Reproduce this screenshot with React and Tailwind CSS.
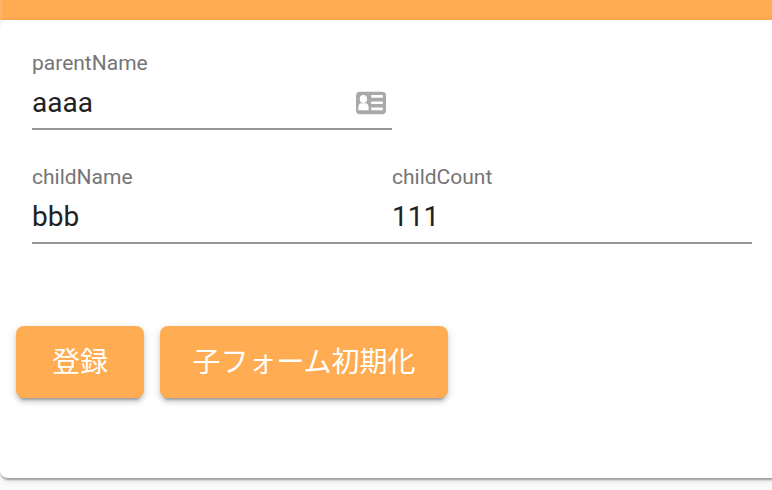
function Field({ label, value, children }) {
  return (
    <label className="block w-[360px]">
      <span className="block h-6 text-[21px] leading-6 text-[#757575]">{label}</span>
      <span className="mt-3 flex h-8 items-center justify-between pr-1.5">
        <span className="text-[28px] leading-8 text-[#212121]">{value}</span>
        {children}
      </span>
      <span className="mt-[9px] block h-0.5 bg-[#949494]" />
    </label>
  );
}

function ContactIcon() {
  return (
    <svg width="30" height="24" viewBox="0 0 30 24">
      <rect width="30" height="22.5" y="0.75" rx="4" fill="#a9a9a9" />
      <g fill="#fff">
        <ellipse cx="7.4" cy="8" rx="3.7" ry="4" />
        <path d="M2.3 19.3v-2.6c0-2.8 1.2-4.4 3-4.4h4.3c1.8 0 3 1.6 3 4.4v2.6z" />
        <path d="M15.2 4h11.6v2.7H15.2zM15.2 10.4h11.6v2.7H15.2zM15.2 16.6h11.6v2.7H15.2z" />
      </g>
    </svg>
  );
}

function RaisedButton({ children }) {
  return (
    <button
      type="button"
      className="h-[72px] rounded-lg bg-[#ffac52] px-8 pt-px text-[28px] leading-[71px] text-white shadow-[0_6px_2px_-4px_rgba(0,0,0,0.2),0_4px_4px_0_rgba(0,0,0,0.14),0_2px_10px_0_rgba(0,0,0,0.12)]"
    >
      {children}
    </button>
  );
}

export default function App() {
  return (
    <div className="h-[490px] overflow-hidden bg-[#fafafa] font-[Roboto,'Noto_Sans_CJK_JP',sans-serif]">
      <div className="h-5 border-l-2 border-[#ffb569] bg-[#ffac52]" />
      <div className="-mr-4 h-[458px] rounded-lg bg-white pt-[31px] shadow-[0_4px_2px_-2px_rgba(0,0,0,0.2),0_2px_2px_0_rgba(0,0,0,0.14),0_2px_6px_0_rgba(0,0,0,0.12)]">
        <div className="px-8">
          <Field label="parentName" value="aaaa">
            <ContactIcon />
          </Field>
          <div className="mt-[35px] flex">
            <Field label="childName" value="bbb" />
            <Field label="childCount" value="111" />
          </div>
        </div>
        <div className="mt-[82px] flex gap-4 px-4">
          <RaisedButton>
            <span className="px-1">登録</span>
          </RaisedButton>
          <RaisedButton>
            <span className="block w-56 whitespace-nowrap">子フォーム初期化</span>
          </RaisedButton>
        </div>
      </div>
    </div>
  );
}
